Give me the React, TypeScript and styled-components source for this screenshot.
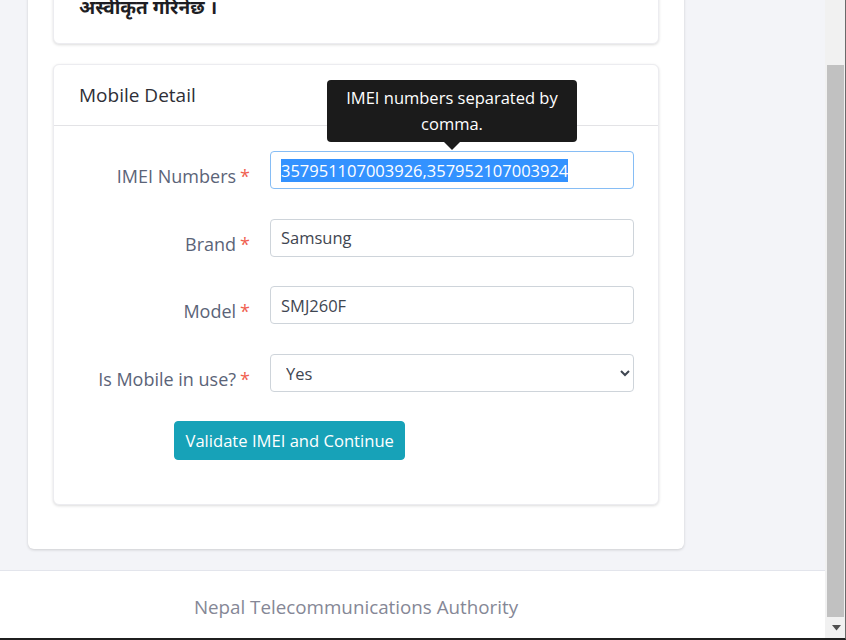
import React, { useEffect, useRef } from "react";
import styled, { createGlobalStyle } from "styled-components";

const GlobalStyle = createGlobalStyle`
  html, body { margin: 0; padding: 0; }
  body {
    font-family: "Open Sans", "Noto Sans", "Noto Sans Devanagari", sans-serif;
    background: #f3f4f8;
    overflow: hidden;
  }
  * { box-sizing: border-box; }
`;

const Frame = styled.div`
  width: 846px;
  height: 640px;
  display: flex;
  border-right: 1px solid #6a6a6a;
  border-bottom: 2px solid #1f1f1f;
  overflow: hidden;
`;

const Main = styled.div`
  flex: 1;
  display: flex;
  flex-direction: column;
  background: #f3f4f8;
  min-width: 0;
`;

const Content = styled.div`
  flex: 1;
  min-height: 0;
  overflow: hidden;
  display: flex;
  flex-direction: column;
  justify-content: flex-end;
  padding: 0 28px 21px;
  width: 712px;
`;

const OuterCard = styled.div`
  background: #fff;
  border-radius: 6px;
  box-shadow: 0 1px 3px rgba(0, 0, 0, 0.16);
  padding: 25px 25px 44px;
  display: flex;
  flex-direction: column;
  gap: 20px;
`;

const Card = styled.div`
  background: #fff;
  border: 1px solid #ececf0;
  border-radius: 6px;
  box-shadow: 0 1px 3px rgba(0, 0, 0, 0.14);
`;

const NoticeBody = styled.div`
  padding: 20px 25px 19px;
`;

const NoticeText = styled.p`
  margin: 0;
  font-family: "Noto Sans Devanagari", "Noto Sans", "Lohit Devanagari", sans-serif;
  font-weight: 700;
  font-size: 19px;
  line-height: 29px;
  color: #1e1e24;
`;

const CardHeader = styled.div`
  padding: 15px 25px 15px;
  border-bottom: 1px solid #e3e3e6;
  font-size: 19px;
  line-height: 30px;
  color: #2e2f37;
`;

const CardBody = styled.div`
  padding: 25px 24px 44px 25px;
  display: flex;
  flex-direction: column;
  gap: 29.5px;
`;

const Row = styled.div`
  display: flex;
  align-items: flex-start;
`;

const Label = styled.label`
  width: 191px;
  height: 38px;
  flex: none;
  padding: 12px 20px 0 0;
  text-align: right;
  font-size: 18px;
  line-height: 26px;
  font-weight: 400;
  color: #5b6478;
`;

const Required = styled.span`
  color: #f0604f;
  margin-left: 4px;
`;

const Field = styled.div`
  flex: 1;
  position: relative;
`;

const Input = styled.input`
  display: block;
  width: 100%;
  height: 38px;
  padding: 6px 10px;
  font-family: inherit;
  font-size: 16.5px;
  color: #3f4651;
  background: #fff;
  border: 1px solid #ced4da;
  border-radius: 4px;
  outline: none;
  &:focus { border-color: #86bdf5; }
  &::selection { background: #3392ff; color: #fff; }
`;

const Select = styled.select`
  display: block;
  width: 100%;
  height: 38px;
  padding: 6px 11px;
  font-family: inherit;
  font-size: 16.5px;
  color: #3f4651;
  background: #fff;
  border: 1px solid #ced4da;
  border-radius: 4px;
  outline: none;
`;

const Tooltip = styled.div`
  position: absolute;
  left: 50%;
  bottom: calc(100% + 9px);
  transform: translateX(-50%);
  width: 250px;
  padding: 5px 14px;
  background: #1b1b1b;
  color: #fff;
  border-radius: 4px;
  font-size: 16.5px;
  line-height: 26px;
  text-align: center;
  &::after {
    content: "";
    position: absolute;
    left: 50%;
    top: 100%;
    margin-left: -8px;
    border-left: 8px solid transparent;
    border-right: 8px solid transparent;
    border-top: 8px solid #1b1b1b;
  }
`;

const Button = styled.button`
  align-self: flex-start;
  margin-left: 95px;
  height: 39px;
  padding: 0 10.5px;
  background: #17a2b8;
  color: #fff;
  border: 1px solid #17a2b8;
  border-radius: 4px;
  font-family: inherit;
  font-size: 16.6px;
  cursor: pointer;
`;

const Footer = styled.footer`
  flex: none;
  height: 68px;
  background: #fff;
  border-top: 1px solid #e3e5ec;
`;

const FooterText = styled.div`
  width: 712px;
  padding-top: 23px;
  text-align: center;
  font-size: 18.8px;
  line-height: 26px;
  color: #858796;
`;

const ScrollTrack = styled.div`
  width: 20px;
  flex: none;
  background: #f1f1f1;
  display: flex;
  flex-direction: column;
`;

const ScrollThumb = styled.div`
  margin: 65px 0 0 2px;
  width: 17px;
  height: 552px;
  background: #c1c1c1;
`;

const ScrollArrow = styled.div`
  flex: 1;
  display: flex;
  align-items: center;
  justify-content: center;
  padding-left: 2px;
`;

export default function App() {
  const imeiRef = useRef<HTMLInputElement>(null);
  useEffect(() => {
    const el = imeiRef.current;
    if (el) {
      el.focus();
      el.select();
    }
  }, []);

  return (
    <>
      <GlobalStyle />
      <Frame>
        <Main>
          <Content>
            <OuterCard>
              <Card>
                <NoticeBody>
                  <NoticeText>अस्वीकृत गरिनेछ ।</NoticeText>
                </NoticeBody>
              </Card>
              <Card>
                <CardHeader>Mobile Detail</CardHeader>
                <CardBody>
                  <Row>
                    <Label htmlFor="imei">
                      IMEI Numbers<Required>*</Required>
                    </Label>
                    <Field>
                      <Tooltip>IMEI numbers separated by comma.</Tooltip>
                      <Input
                        id="imei"
                        ref={imeiRef}
                        defaultValue="357951107003926,357952107003924"
                      />
                    </Field>
                  </Row>
                  <Row>
                    <Label htmlFor="brand">
                      Brand<Required>*</Required>
                    </Label>
                    <Field>
                      <Input id="brand" defaultValue="Samsung" />
                    </Field>
                  </Row>
                  <Row>
                    <Label htmlFor="model">
                      Model<Required>*</Required>
                    </Label>
                    <Field>
                      <Input id="model" defaultValue="SMJ260F" />
                    </Field>
                  </Row>
                  <Row>
                    <Label htmlFor="inuse">
                      Is Mobile in use?<Required>*</Required>
                    </Label>
                    <Field>
                      <Select id="inuse" defaultValue="Yes">
                        <option>Yes</option>
                        <option>No</option>
                      </Select>
                    </Field>
                  </Row>
                  <Button type="button">Validate IMEI and Continue</Button>
                </CardBody>
              </Card>
            </OuterCard>
          </Content>
          <Footer>
            <FooterText>Nepal Telecommunications Authority</FooterText>
          </Footer>
        </Main>
        <ScrollTrack>
          <ScrollThumb />
          <ScrollArrow>
            <svg width="9" height="6" viewBox="0 0 9 6">
              <path d="M0 0 H9 L4.5 5.5 Z" fill="#505050" />
            </svg>
          </ScrollArrow>
        </ScrollTrack>
      </Frame>
    </>
  );
}
